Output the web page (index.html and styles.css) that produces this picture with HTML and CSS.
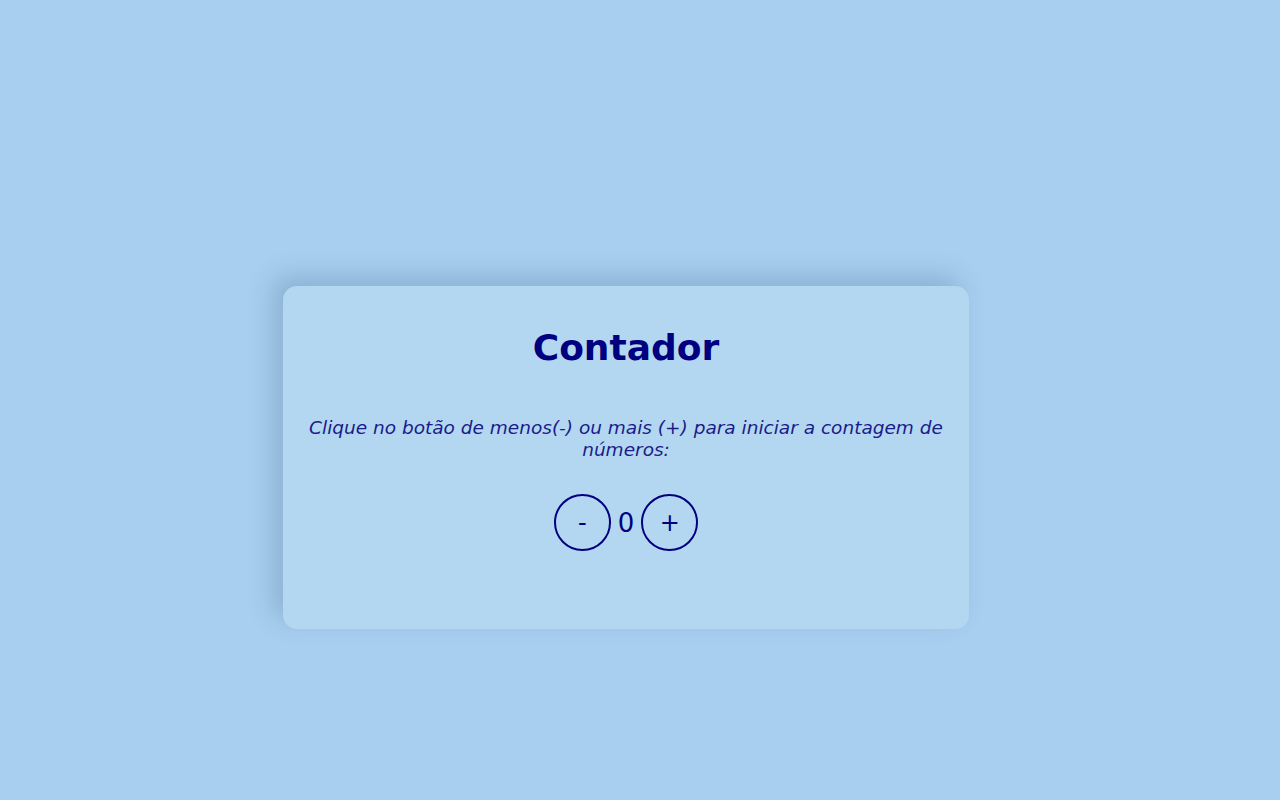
FILE: index.html
```html
<!DOCTYPE html>
<html lang="pt-BR">
<head>
<meta charset="utf-8">
<title>Contador</title>
<link rel="stylesheet" href="styles.css">
</head>
<body>
<main class="page">
  <section class="card">
    <h1 class="title">Contador</h1>
    <p class="hint">Clique no botão de menos(-) ou mais (+) para iniciar a contagem de números:</p>
    <div class="counter">
      <button class="btn" type="button">-</button>
      <span class="value">0</span>
      <button class="btn" type="button">+</button>
    </div>
  </section>
</main>
</body>
</html>
```

FILE: styles.css
```css
html, body {
  margin: 0;
  padding: 0;
  height: 100%;
}
body {
  background: #a8cfef;
  font-family: "DejaVu Sans", Verdana, sans-serif;
}
.page {
  padding-top: 286px;
}
.card {
  box-sizing: border-box;
  width: 686px;
  height: 343px;
  margin-left: 283px;
  background: #b3d7f1;
  border-radius: 14px;
  box-shadow: -10px -10px 24px rgba(60, 90, 130, 0.25);
  padding: 40px 20px 0;
  text-align: center;
}
.title {
  margin: 0;
  font-size: 36px;
  font-weight: bold;
  color: #000080;
  line-height: 44px;
}
.hint {
  margin: 47px 0 0;
  font-size: 18.5px;
  font-style: italic;
  line-height: 22px;
  color: #1b1b8a;
}
.counter {
  margin-top: 33px;
  display: flex;
  justify-content: center;
  align-items: center;
  gap: 7px;
}
.btn {
  width: 57px;
  height: 57px;
  border-radius: 50%;
  border: 2px solid #000080;
  background: #b3d7f1;
  color: #000080;
  font-family: "DejaVu Sans", Verdana, sans-serif;
  font-size: 24px;
  padding: 0;
}
.value {
  font-size: 26px;
  color: #000080;
}
```
